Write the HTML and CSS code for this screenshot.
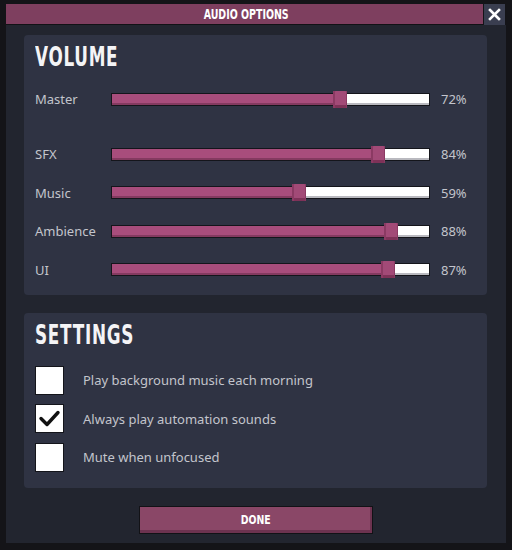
FILE: index.html
```html
<!DOCTYPE html>
<html>
<head>
<meta charset="utf-8">
<link rel="stylesheet" href="styles.css">
</head>
<body>
<div class="window">
  <div class="titlerow">
    <div class="titlebar"><span class="title-text">AUDIO OPTIONS</span></div>
    <div class="close">
      <svg width="13" height="13" viewBox="0 0 13 13"><path d="M2 2 L11 11 M11 2 L2 11" stroke="#fff" stroke-width="2.6" stroke-linecap="square"/></svg>
    </div>
  </div>
  <div class="body">
    <section class="panel volume">
      <h2 class="heading"><span class="heading-text">VOLUME</span></h2>
      <div class="row first">
        <span class="label">Master</span>
        <div class="track"><div class="fill" style="width:72%"></div><div class="handle" style="left:72%"></div></div>
        <span class="pct">72%</span>
      </div>
      <div class="row">
        <span class="label">SFX</span>
        <div class="track"><div class="fill" style="width:84%"></div><div class="handle" style="left:84%"></div></div>
        <span class="pct">84%</span>
      </div>
      <div class="row">
        <span class="label">Music</span>
        <div class="track"><div class="fill" style="width:59%"></div><div class="handle" style="left:59%"></div></div>
        <span class="pct">59%</span>
      </div>
      <div class="row">
        <span class="label">Ambience</span>
        <div class="track"><div class="fill" style="width:88%"></div><div class="handle" style="left:88%"></div></div>
        <span class="pct">88%</span>
      </div>
      <div class="row">
        <span class="label">UI</span>
        <div class="track"><div class="fill" style="width:87%"></div><div class="handle" style="left:87%"></div></div>
        <span class="pct">87%</span>
      </div>
    </section>
    <section class="panel settings">
      <h2 class="heading"><span class="heading-text">SETTINGS</span></h2>
      <div class="check-row">
        <span class="box"></span>
        <span class="check-label">Play background music each morning</span>
      </div>
      <div class="check-row">
        <span class="box"><svg width="27" height="27" viewBox="0 0 27 27"><path d="M5 13.5 L11 19.5 L22 7.5" fill="none" stroke="#111" stroke-width="3.4" stroke-linecap="round" stroke-linejoin="round"/></svg></span>
        <span class="check-label">Always play automation sounds</span>
      </div>
      <div class="check-row">
        <span class="box"></span>
        <span class="check-label">Mute when unfocused</span>
      </div>
    </section>
    <div class="actions">
      <button class="done"><span class="done-text">DONE</span></button>
    </div>
  </div>
</div>
</body>
</html>
```

FILE: styles.css
```css
html, body {
  margin: 0;
  padding: 0;
}
body {
  background: #141418;
  width: 512px;
  height: 550px;
  overflow: hidden;
  font-family: "Noto Sans", "Open Sans", sans-serif;
}
.window {
  margin: 4px 0 0 6px;
  width: 500px;
}
.titlerow {
  display: flex;
  gap: 1px;
  height: 21px;
}
.titlebar {
  width: 477px;
  background: #7e3f5f;
  color: #fff;
  font-family: "DejaVu Sans Condensed", "DejaVu Sans", sans-serif;
  font-weight: bold;
  font-size: 14px;
  line-height: 21px;
  text-align: center;
  border-bottom: 1px solid #121216;
  box-sizing: border-box;
}
.title-text {
  display: inline-block;
  transform: scaleX(0.75);
  padding-left: 4px;
}
.close {
  width: 21px;
  background: #3a3e50;
  display: flex;
  align-items: center;
  justify-content: center;
}
.body {
  background: #22252f;
  height: 518px;
  box-sizing: border-box;
  padding: 10px 19px 0 18px;
  display: flex;
  flex-direction: column;
  gap: 18px;
}
.panel {
  background: #2f3343;
  border-radius: 4px;
  padding: 0 11px;
}
.volume {
  height: 260px;
  box-sizing: border-box;
}
.settings {
  height: 175px;
  box-sizing: border-box;
}
.heading {
  margin: 0;
  color: #f4f4f6;
  font-family: "DejaVu Sans Condensed", "DejaVu Sans", sans-serif;
  font-weight: bold;
  font-size: 26px;
  line-height: 26px;
  padding-top: 9px;
  height: 45px;
  box-sizing: border-box;
}
.heading-text {
  display: inline-block;
  transform: scaleX(0.72);
  transform-origin: left center;
  letter-spacing: 1px;
}
.row {
  display: flex;
  align-items: center;
  height: 38.5px;
}
.row.first {
  margin-bottom: 16.5px;
}
.label {
  width: 76px;
  color: #c3c5cc;
  font-size: 13px;
}
.track {
  position: relative;
  width: 319px;
  height: 13px;
  box-sizing: border-box;
  border: 1px solid #14151b;
  background: #fff;
  box-shadow: inset 0 -2px 0 #b9b9bf;
}
.fill {
  height: 100%;
  background: #a84d7c;
  box-shadow: inset 0 -2px 0 #843a60;
}
.handle {
  position: absolute;
  top: -3px;
  width: 14px;
  height: 17px;
  margin-left: -7px;
  background: #a24a77;
  box-shadow: inset 2px 0 0 #8b3a63, inset -1px 0 0 #8b3a63, inset 0 -3px 0 #7e3258;
  border-radius: 1px;
}
.pct {
  margin-left: 11px;
  color: #c3c5cc;
  font-size: 13px;
}
.check-row {
  display: flex;
  align-items: center;
  height: 38.5px;
}
.settings .heading {
  margin-bottom: 3px;
}
.box {
  width: 29px;
  height: 29px;
  box-sizing: border-box;
  background: #fff;
  border: 1px solid #14151b;
  display: flex;
  align-items: center;
  justify-content: center;
}
.check-label {
  margin-left: 19px;
  color: #c3c5cc;
  font-size: 13px;
}
.actions {
  display: flex;
  justify-content: center;
}
.done {
  width: 234px;
  height: 28px;
  background: #8a4767;
  border: 1px solid #121216;
  box-shadow: inset 0 -3px 0 #6d3350, inset -2px 0 0 #6d3350;
  color: #fff;
  font-family: "DejaVu Sans Condensed", "DejaVu Sans", sans-serif;
  font-weight: bold;
  font-size: 13px;
  padding: 0 0 2px;
}
.done-text {
  display: inline-block;
  transform: scaleX(0.8);
}
```
